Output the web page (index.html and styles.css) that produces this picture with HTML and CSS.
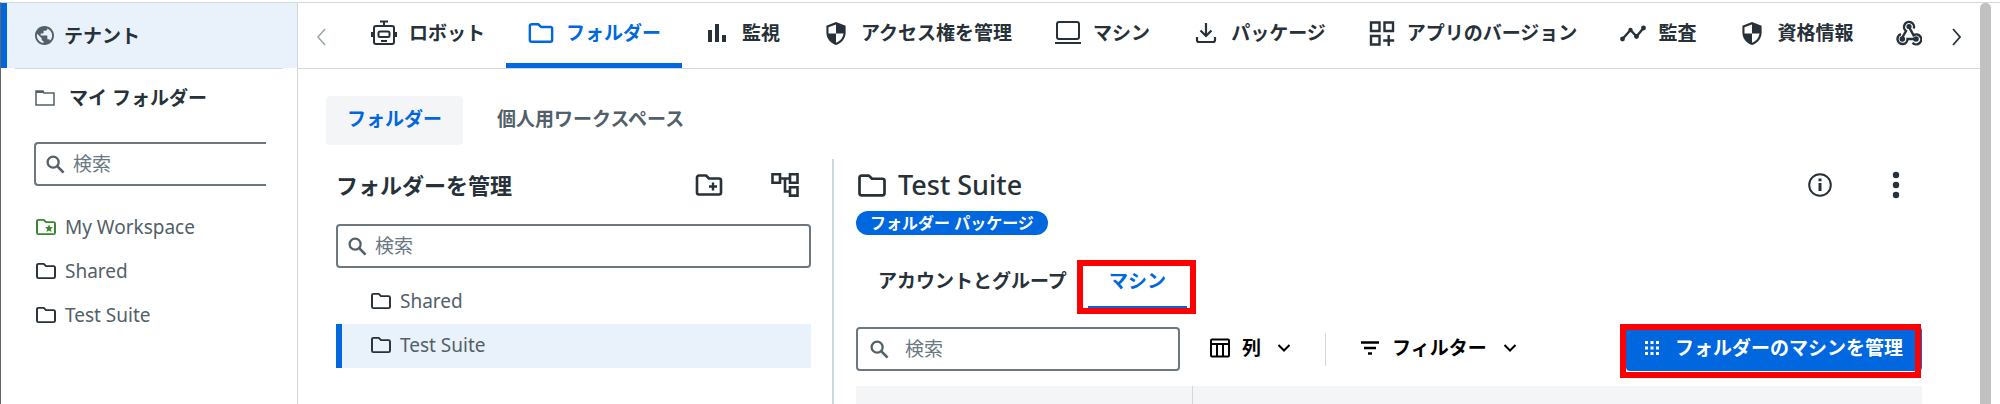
FILE: index.html
```
<!DOCTYPE html>
<html lang="ja">
<head>
  <meta charset="UTF-8">
  <meta name="viewport" content="width=device-width, initial-scale=1.0">
  <title>フォルダー - Test Suite</title>
  <link rel="stylesheet" href="styles.css">
</head>
<body>
  <!-- shared icons -->
  <svg class="sprite" aria-hidden="true">
    <symbol id="folder" viewBox="0 0 28 24">
      <path d="M2 4.500a2 2 0 0 1 2-2h7l3 3h10a2 2 0 0 1 2 2v12a2 2 0 0 1-2 2H4a2 2 0 0 1-2-2z" fill="none" stroke="currentColor" stroke-width="2.600" stroke-linejoin="round"/>
    </symbol>
    <symbol id="search" viewBox="0 0 20 20">
      <circle cx="7.500" cy="7.500" r="5.800" fill="none" stroke="currentColor" stroke-width="2.400"/>
      <path d="M12 12l6.500 6.500" stroke="currentColor" stroke-width="2.800"/>
    </symbol>
    <symbol id="shield" viewBox="0 0 22 26">
      <path d="M11 1L1 5v7c0 6 4 11 10 13 6-2 10-7 10-13V5z" fill="currentColor"/>
      <path d="M11 3.600v9.400H3.200V6.600zM11 13h7.800c-.6 4.500-3.500 8-7.800 9.600z" fill="#fff"/>
    </symbol>
    <symbol id="chevron" viewBox="0 0 14 10">
      <path d="M1.500 2l5.500 5.500L12.500 2" fill="none" stroke="currentColor" stroke-width="2"/>
    </symbol>
  </svg>

  <div class="app">
    <aside class="sidebar">
      <a href="#" class="tenant">
        <svg class="icon-globe" viewBox="2 2 20 20"><path fill="currentColor" d="M12 2C6.480 2 2 6.480 2 12s4.480 10 10 10 10-4.480 10-10S17.520 2 12 2zm-1 17.930c-3.950-.49-7-3.850-7-7.930 0-.62.080-1.210.21-1.790L9 15v1c0 1.100.9 2 2 2v1.930zm6.900-2.540c-.26-.81-1-1.390-1.900-1.390h-1v-3c0-.55-.45-1-1-1H8v-2h2c.55 0 1-.45 1-1V7h2c1.100 0 2-.9 2-2v-.41c2.930 1.190 5 4.060 5 7.410 0 2.080-.8 3.970-2.100 5.390z"/></svg>
        <span>テナント</span>
      </a>
      <hr class="rule">
      <div class="my-folders">
        <svg viewBox="0 0 20 16"><path d="M1 15V1h7l1 2h10v12z" fill="none" stroke="currentColor" stroke-width="1.500"/><path d="M1 1h7l1 2H1z" fill="currentColor"/></svg>
        <span>マイ フォルダー</span>
      </div>
      <div class="search-box search-cut">
        <svg><use href="#search"/></svg>
        <input type="text" placeholder="検索" aria-label="フォルダーを検索">
      </div>
      <nav class="tree">
        <a href="#" class="tree-item">
          <svg class="green" viewBox="0 0 28 24"><use href="#folder" width="28" height="24"/><path d="M18 8.500l1.500 3.500 3.800.300-2.900 2.500.9 3.700-3.300-2-3.300 2 .9-3.700-2.900-2.500 3.800-.300z" fill="currentColor"/></svg>
          <span>My Workspace</span>
        </a>
        <a href="#" class="tree-item"><svg><use href="#folder"/></svg><span>Shared</span></a>
        <a href="#" class="tree-item"><svg><use href="#folder"/></svg><span>Test Suite</span></a>
      </nav>
    </aside>

    <main class="main">
      <nav class="tabs">
        <button class="scroll-btn scroll-prev" aria-label="前へ"><svg viewBox="0 0 10 18"><path d="M9 1L2 9l7 8" fill="none" stroke="currentColor" stroke-width="1.500"/></svg></button>
        <a href="#" class="tab">
          <svg viewBox="0 0 26 26" fill="none" stroke="currentColor" stroke-width="2"><rect x="3" y="6" width="20" height="18" rx="2"/><rect x="7.500" y="11.500" width="11" height="5.500" rx="1.500"/><path d="M9 1.500h8M13 1.500V6M1 12v5M25 12v5M10 21h6"/></svg>
          <span>ロボット</span>
        </a>
        <a href="#" class="tab active"><svg><use href="#folder"/></svg><span>フォルダー</span></a>
        <a href="#" class="tab">
          <svg viewBox="0 0 26 26"><path d="M4 10h4v12H4zM11 4h4v18h-4zM18 15h4v7h-4z" fill="currentColor"/></svg>
          <span>監視</span>
        </a>
        <a href="#" class="tab"><svg class="shield"><use href="#shield"/></svg><span>アクセス権を管理</span></a>
        <a href="#" class="tab">
          <svg viewBox="0 0 26 26" fill="none" stroke="currentColor" stroke-width="2"><rect x="2" y="2" width="22" height="17" rx="2"/><path d="M0 23h26"/></svg>
          <span>マシン</span>
        </a>
        <a href="#" class="tab">
          <svg viewBox="0 0 26 26" fill="none" stroke="currentColor" stroke-width="2.200"><path d="M13 3v12M7.500 10.500L13 16l5.500-5.500M4 17v3a2 2 0 0 0 2 2h14a2 2 0 0 0 2-2v-3"/></svg>
          <span>パッケージ</span>
        </a>
        <a href="#" class="tab">
          <svg viewBox="0 0 26 26" fill="none" stroke="currentColor" stroke-width="2.400"><path d="M2 2.500h8.500V11H2zM15.500 2.500H24V11h-8.500zM2 16h8.500v8.500H2zM19.700 15v11M14.200 20.500h11"/></svg>
          <span>アプリのバージョン</span>
        </a>
        <a href="#" class="tab">
          <svg viewBox="0 0 26 26"><path d="M2.500 19l8-9 6 6.500L23.500 8" fill="none" stroke="currentColor" stroke-width="2.400"/><g fill="currentColor"><circle cx="2.500" cy="19" r="2.400"/><circle cx="10.500" cy="10" r="2.200"/><circle cx="16.500" cy="16.500" r="2.400"/><circle cx="23.500" cy="8" r="2.400"/></g></svg>
          <span>監査</span>
        </a>
        <a href="#" class="tab"><svg class="shield"><use href="#shield"/></svg><span>資格情報</span></a>
        <a href="#" class="tab" aria-label="Webhook">
          <svg viewBox="0 0 26 26" fill="none" stroke="currentColor" stroke-width="2.400"><path d="M17.800 8.500A5 5 0 1 0 10 11l-4 7"/><path d="M5 14.200a5 5 0 1 0 6.500 4.800H20"/><path d="M13 7l4.500 8.200a5 5 0 1 1-1 7.500"/><g fill="currentColor" stroke="none"><circle cx="13" cy="6.500" r="2.600"/><circle cx="6.300" cy="19" r="2.800"/><circle cx="20" cy="19" r="2.800"/></g></svg>
        </a>
        <button class="scroll-btn scroll-next" aria-label="次へ"><svg viewBox="0 0 10 18"><path d="M1 1l7 8-7 8" fill="none" stroke="currentColor" stroke-width="1.800"/></svg></button>
      </nav>

      <div class="sub-tabs">
        <button class="sub-tab selected">フォルダー</button>
        <button class="sub-tab">個人用ワークスペース</button>
      </div>

      <div class="content">
        <section class="folders">
          <div class="folders-head">
            <h2>フォルダーを管理</h2>
            <button class="icon-btn" aria-label="フォルダーを追加">
              <svg viewBox="0 0 28 24"><use href="#folder" width="28" height="24"/><path d="M18 9.500v8M14 13.500h8" stroke="currentColor" stroke-width="2.400"/></svg>
            </button>
            <button class="icon-btn" aria-label="ツリーを表示">
              <svg viewBox="0 0 28 24" fill="none" stroke="currentColor" stroke-width="2.600"><path d="M1.500 1.300h7.500v8.500H1.500zM19 1.300h7.500v8.500H19zM19 14.300h7.500v8.300H19zM9 5.500h10M14 5.500v13h5"/></svg>
            </button>
          </div>
          <div class="search-box">
            <svg><use href="#search"/></svg>
            <input type="text" placeholder="検索" aria-label="フォルダーを検索">
          </div>
          <div class="folder-list">
            <a href="#" class="folder-item"><svg><use href="#folder"/></svg><span>Shared</span></a>
            <a href="#" class="folder-item current"><svg><use href="#folder"/></svg><span>Test Suite</span></a>
          </div>
        </section>

        <section class="detail">
          <div class="detail-head">
            <svg class="head-icon"><use href="#folder"/></svg>
            <h1>Test Suite</h1>
            <button class="icon-btn" aria-label="情報">
              <svg viewBox="-2 -2 28 28"><circle cx="12" cy="12" r="10.800" fill="none" stroke="currentColor" stroke-width="2"/><path d="M12 10v8" stroke="currentColor" stroke-width="3"/><path d="M12 5.500v2.800" stroke="currentColor" stroke-width="3"/></svg>
            </button>
            <button class="icon-btn" aria-label="その他">
              <svg viewBox="0 0 28 28" fill="currentColor"><circle cx="14" cy="4" r="3.200"/><circle cx="14" cy="14" r="3.200"/><circle cx="14" cy="24" r="3.200"/></svg>
            </button>
          </div>
          <span class="badge">フォルダー パッケージ</span>

          <div class="detail-tabs">
            <button class="detail-tab">アカウントとグループ</button>
            <button class="detail-tab active marked">マシン</button>
          </div>

          <div class="toolbar">
            <div class="search-box search-wide">
              <svg><use href="#search"/></svg>
              <input type="text" placeholder="検索" aria-label="マシンを検索">
            </div>
            <button class="tool-btn">
              <svg class="tool-icon" viewBox="0 0 20 20" fill="none" stroke="currentColor" stroke-width="2"><rect x="1" y="1.500" width="18" height="17" rx="1"/><path d="M1 6h18M7 6v12M13 6v12"/></svg>
              <span>列</span>
              <svg class="caret"><use href="#chevron"/></svg>
            </button>
            <span class="divider"></span>
            <button class="tool-btn">
              <svg class="tool-icon" viewBox="0 0 20 20"><path d="M1 4.500h18M4 10h12M8 15.500h4" stroke="currentColor" stroke-width="2.400"/></svg>
              <span>フィルター</span>
              <svg class="caret"><use href="#chevron"/></svg>
            </button>
            <button class="primary-btn marked">
              <svg viewBox="0 0 14 14" fill="#fff"><path d="M0 0h3v3H0zM5.500 0h3v3h-3zM11 0h3v3h-3zM0 5.500h3v3H0zM5.500 5.500h3v3h-3zM11 5.500h3v3h-3zM0 11h3v3H0zM5.500 11h3v3h-3zM11 11h3v3h-3z"/></svg>
              <span>フォルダーのマシンを管理</span>
            </button>
          </div>

          <div class="grid-head">
            <div class="grid-cell"></div>
            <div class="grid-cell"></div>
          </div>
        </section>
      </div>
    </main>
    <div class="scrollbar"></div>
  </div>
</body>
</html>
```
FILE: styles.css
```
* {
    box-sizing: border-box;
}
body {
    margin: 0;
    padding-top: 2px;
    height: 100vh;
    overflow: hidden;
    background-color: #fff;
    color: #273139;
    font-family: "Noto Sans", "Noto Sans CJK JP", sans-serif;
    font-size: 19px;
    line-height: 24px;
}
a {
    color: inherit;
    text-decoration: none;
}
button {
    border: none;
    padding: 0;
    background: none;
    color: inherit;
    font: inherit;
    cursor: pointer;
}
svg {
    flex: none;
}
h1, h2 {
    margin: 0;
}
.sprite {
    display: none;
}
.app {
    display: flex;
    height: 100%;
    border-top: 1px solid #cfd8dd;
    border-left: 1px solid #666;
    padding-right: 9px;
}

/* sidebar */
.sidebar {
    width: 297px;
    flex: none;
    border-right: 1px solid #cfd8dd;
}
.tenant {
    display: flex;
    align-items: center;
    gap: 10px;
    height: 65px;
    padding-left: 28px;
    border-left: 6px solid #0067df;
    background-color: #e9f1fa;
    font-weight: 600;
}
.icon-globe {
    width: 19px;
    height: 19px;
    color: #526069;
}
.rule {
    margin: 0 14px;
    border: none;
    border-top: 1px solid #cfd8dd;
}
.my-folders {
    display: flex;
    align-items: center;
    gap: 14px;
    padding: 17px 0 0 34px;
    font-weight: 600;
}
.my-folders svg {
    width: 20px;
    height: 16px;
    color: #526069;
}
.search-box {
    display: flex;
    align-items: center;
    gap: 8px;
    height: 44px;
    padding: 0 10px;
    border: 2px solid #6b7882;
    border-radius: 4px;
}
.search-box svg {
    width: 19px;
    height: 19px;
    color: #526069;
}
.search-box input {
    flex: 1;
    min-width: 0;
    padding: 0;
    border: none;
    outline: none;
    background: none;
    font: inherit;
}
.search-box input::placeholder {
    color: #6b7882;
    opacity: 1;
}
.search-cut {
    margin: 32px 31px 0 33px;
    border-right: none;
    border-radius: 4px 0 0 4px;
}
.tree {
    padding-top: 20px;
}
.tree-item, .folder-item {
    display: flex;
    align-items: center;
    gap: 8px;
    height: 44px;
    padding-left: 34px;
    padding-bottom: 2px;
    color: #526069;
}
.tree-item svg, .folder-item svg {
    width: 22px;
    height: 18px;
    color: #273139;
}
.tree-item .green {
    color: #38882f;
}

/* top tabs */
.main {
    flex: 1;
    min-width: 0;
    display: flex;
    flex-direction: column;
}
.tabs {
    display: flex;
    height: 66px;
    border-bottom: 1px solid #cfd8dd;
}
.tab {
    display: flex;
    align-items: center;
    gap: 12px;
    padding: 0 21px 0 22px;
    border-bottom: 5px solid transparent;
    font-weight: 600;
    white-space: nowrap;
}
.tab svg {
    width: 26px;
    height: 26px;
}
.tab .shield {
    height: 25px;
}
.tab.active {
    color: #0067df;
    border-bottom-color: #0067df;
}
.scroll-btn {
    display: flex;
    align-items: center;
    padding-top: 2px;
}
.scroll-btn svg {
    width: 10px;
    height: 18px;
}
.scroll-prev {
    padding-left: 18px;
    padding-right: 23px;
    color: #9aa5ac;
}
.scroll-next {
    margin-left: auto;
    padding-right: 18px;
}

/* sub tabs */
.sub-tabs {
    display: flex;
    padding: 27px 28px 0;
    gap: 13px;
}
.sub-tab {
    height: 49px;
    padding: 0 21px 3px;
    border-radius: 4px;
    color: #526069;
    font-weight: 600;
}
.sub-tab.selected {
    background-color: #f4f5f7;
    color: #0067df;
}

/* folder panel */
.content {
    display: flex;
    flex: 1;
    padding: 14px 58px 0 38px;
}
.folders {
    width: 498px;
    flex: none;
    padding-right: 21px;
    border-right: 2px solid #cfd8dd;
}
.folders-head {
    display: flex;
    align-items: center;
    gap: 48px;
    height: 52px;
    padding-right: 12px;
}
.folders-head h2 {
    margin-right: auto;
    font-size: 22px;
    font-weight: 600;
}
.icon-btn {
    display: flex;
    align-items: center;
}
.icon-btn svg {
    width: 28px;
    height: 24px;
}
.folders .search-box {
    margin-top: 13px;
}
.folder-list {
    padding-top: 12px;
}
.folder-item.current {
    padding-left: 28px;
    border-left: 6px solid #0067df;
    background-color: #e9f1fa;
}

/* detail panel */
.detail {
    flex: 1;
    min-width: 0;
    display: flex;
    flex-direction: column;
    padding-left: 22px;
}
.detail-head {
    display: flex;
    align-items: center;
    height: 52px;
    padding-right: 12px;
}
.detail-head h1 {
    margin: 0 auto 0 10px;
    font-size: 27px;
    font-weight: 500;
}
.head-icon {
    width: 32px;
    height: 25px;
}
.detail-head .icon-btn {
    margin-left: 48px;
}
.detail-head .icon-btn svg {
    height: 28px;
}
.badge {
    align-self: flex-start;
    padding: 0 14px;
    border-radius: 12px;
    background-color: #0067df;
    color: #fff;
    font-size: 16px;
    font-weight: 600;
}
.detail-tabs {
    display: flex;
    padding: 25px 0 0 1px;
}
.detail-tab {
    height: 50px;
    padding: 0 21px 4px;
    border-bottom: 4px solid transparent;
    font-weight: 600;
}
.detail-tab.active {
    color: #0067df;
    border-bottom-color: #0067df;
}
/* red frame over the marked control */
.marked {
    position: relative;
}
.marked::after {
    content: "";
    position: absolute;
    inset: 0 -9px -8px -11px;
    border: 6px solid #f00;
}
.toolbar {
    display: flex;
    align-items: center;
    padding-top: 17px;
}
.search-wide {
    width: 324px;
    gap: 16px;
    padding: 0 12px;
}
.tool-btn {
    display: flex;
    align-items: center;
    margin-left: 30px;
    padding-bottom: 2px;
    color: #000;
    font-weight: 600;
}
.tool-icon {
    width: 20px;
    height: 20px;
    margin-right: 12px;
}
.caret {
    width: 14px;
    height: 10px;
    margin-left: 16px;
}
.divider {
    width: 1px;
    height: 33px;
    margin: 0 4px 0 34px;
    background-color: #cfd8dd;
}
.primary-btn {
    display: flex;
    align-items: center;
    gap: 16px;
    height: 44px;
    margin-left: auto;
    padding: 0 19px 2px;
    border-radius: 4px;
    background-color: #0067df;
    color: #fff;
    font-weight: 700;
}
.primary-btn svg {
    width: 14px;
    height: 14px;
}
.primary-btn.marked::after {
    inset: -3px 1px -7px -6px;
}
.grid-head {
    display: flex;
    flex: 1;
    margin-top: 15px;
    background-color: #f4f5f7;
}
.grid-cell:first-child {
    width: 337px;
    border-right: 1px solid #cfd8dd;
}
.scrollbar {
    width: 11px;
    border-radius: 5px 5px 0 0;
    background-color: #c1c1c1;
}
```
